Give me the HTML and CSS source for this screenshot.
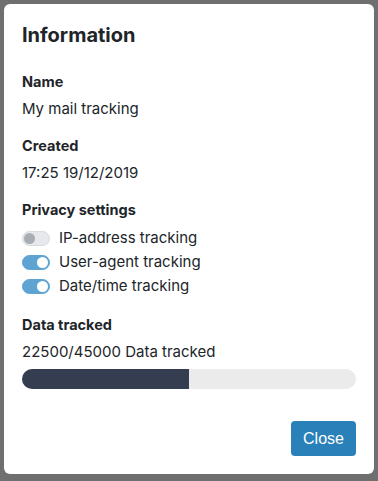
FILE: index.html
```html
<!DOCTYPE html>
<html>
<head>
<meta charset="utf-8">
<link rel="stylesheet" href="styles.css">
</head>
<body>
<div class="modal">
  <h2 class="title">Information</h2>
  <div class="section">
    <div class="label">Name</div>
    <div class="value">My mail tracking</div>
  </div>
  <div class="section">
    <div class="label">Created</div>
    <div class="value">17:25 19/12/2019</div>
  </div>
  <div class="section">
    <div class="label">Privacy settings</div>
    <div class="toggles">
      <div class="toggle-row"><span class="switch"></span><span class="toggle-text">IP-address tracking</span></div>
      <div class="toggle-row"><span class="switch on"></span><span class="toggle-text">User-agent tracking</span></div>
      <div class="toggle-row"><span class="switch on"></span><span class="toggle-text">Date/time tracking</span></div>
    </div>
  </div>
  <div class="section">
    <div class="label">Data tracked</div>
    <div class="value">22500/45000 Data tracked</div>
    <div class="bar"><div class="bar-fill" style="width:50%"></div></div>
  </div>
  <div class="footer">
    <button class="btn">Close</button>
  </div>
</div>
</body>
</html>
```
FILE: styles.css
```css
html, body {
  margin: 0;
  padding: 0;
  background: #6f6f6f;
  height: 100%;
}
body {
  font-family: Inter, Lato, "Liberation Sans", sans-serif;
  color: #212529;
  overflow: hidden;
}
.modal {
  margin: 4px;
  width: 370px;
  height: 470px;
  box-sizing: border-box;
  background: #fff;
  border-radius: 6px;
  padding: 18px 18px 18px;
  display: flex;
  flex-direction: column;
}
.title {
  margin: 0;
  font-size: 20px;
  line-height: 26px;
  font-weight: 700;
}
.section {
  margin-top: 17px;
}
.title + .section {
  margin-top: 24px;
}
.label {
  font-size: 14.5px;
  line-height: 20px;
  font-weight: 700;
  margin-bottom: 7px;
}
.value {
  font-size: 15px;
  line-height: 20px;
}
.toggles {
  display: flex;
  flex-direction: column;
  margin-top: -1px;
}
.toggle-row {
  display: flex;
  align-items: center;
  gap: 9px;
  height: 24px;
}
.toggle-text {
  font-size: 15px;
  line-height: 20px;
}
.switch {
  position: relative;
  box-sizing: border-box;
  width: 28px;
  height: 15px;
  border-radius: 8px;
  background: #e6e8eb;
  border: 1px solid #d8dbdf;
  flex: none;
}
.switch::after {
  content: "";
  position: absolute;
  top: 1px;
  left: 1px;
  width: 11px;
  height: 11px;
  border-radius: 50%;
  background: #a8adb3;
}
.switch.on {
  background: #5ea3d2;
  border-color: #5ea3d2;
}
.switch.on::after {
  left: auto;
  right: 1px;
  background: #fff;
}
.bar {
  margin-top: 7px;
  height: 20px;
  border-radius: 10px;
  background: #ebebeb;
  overflow: hidden;
}
.bar-fill {
  height: 100%;
  background: #343e50;
}
.footer {
  margin-top: auto;
  display: flex;
  justify-content: flex-end;
}
.btn {
  width: 65px;
  height: 35px;
  border: none;
  border-radius: 4px;
  background: #2a80b9;
  color: #fff;
  font-family: "Liberation Sans", Arial, sans-serif;
  font-size: 16px;
  padding: 0;
}
```
